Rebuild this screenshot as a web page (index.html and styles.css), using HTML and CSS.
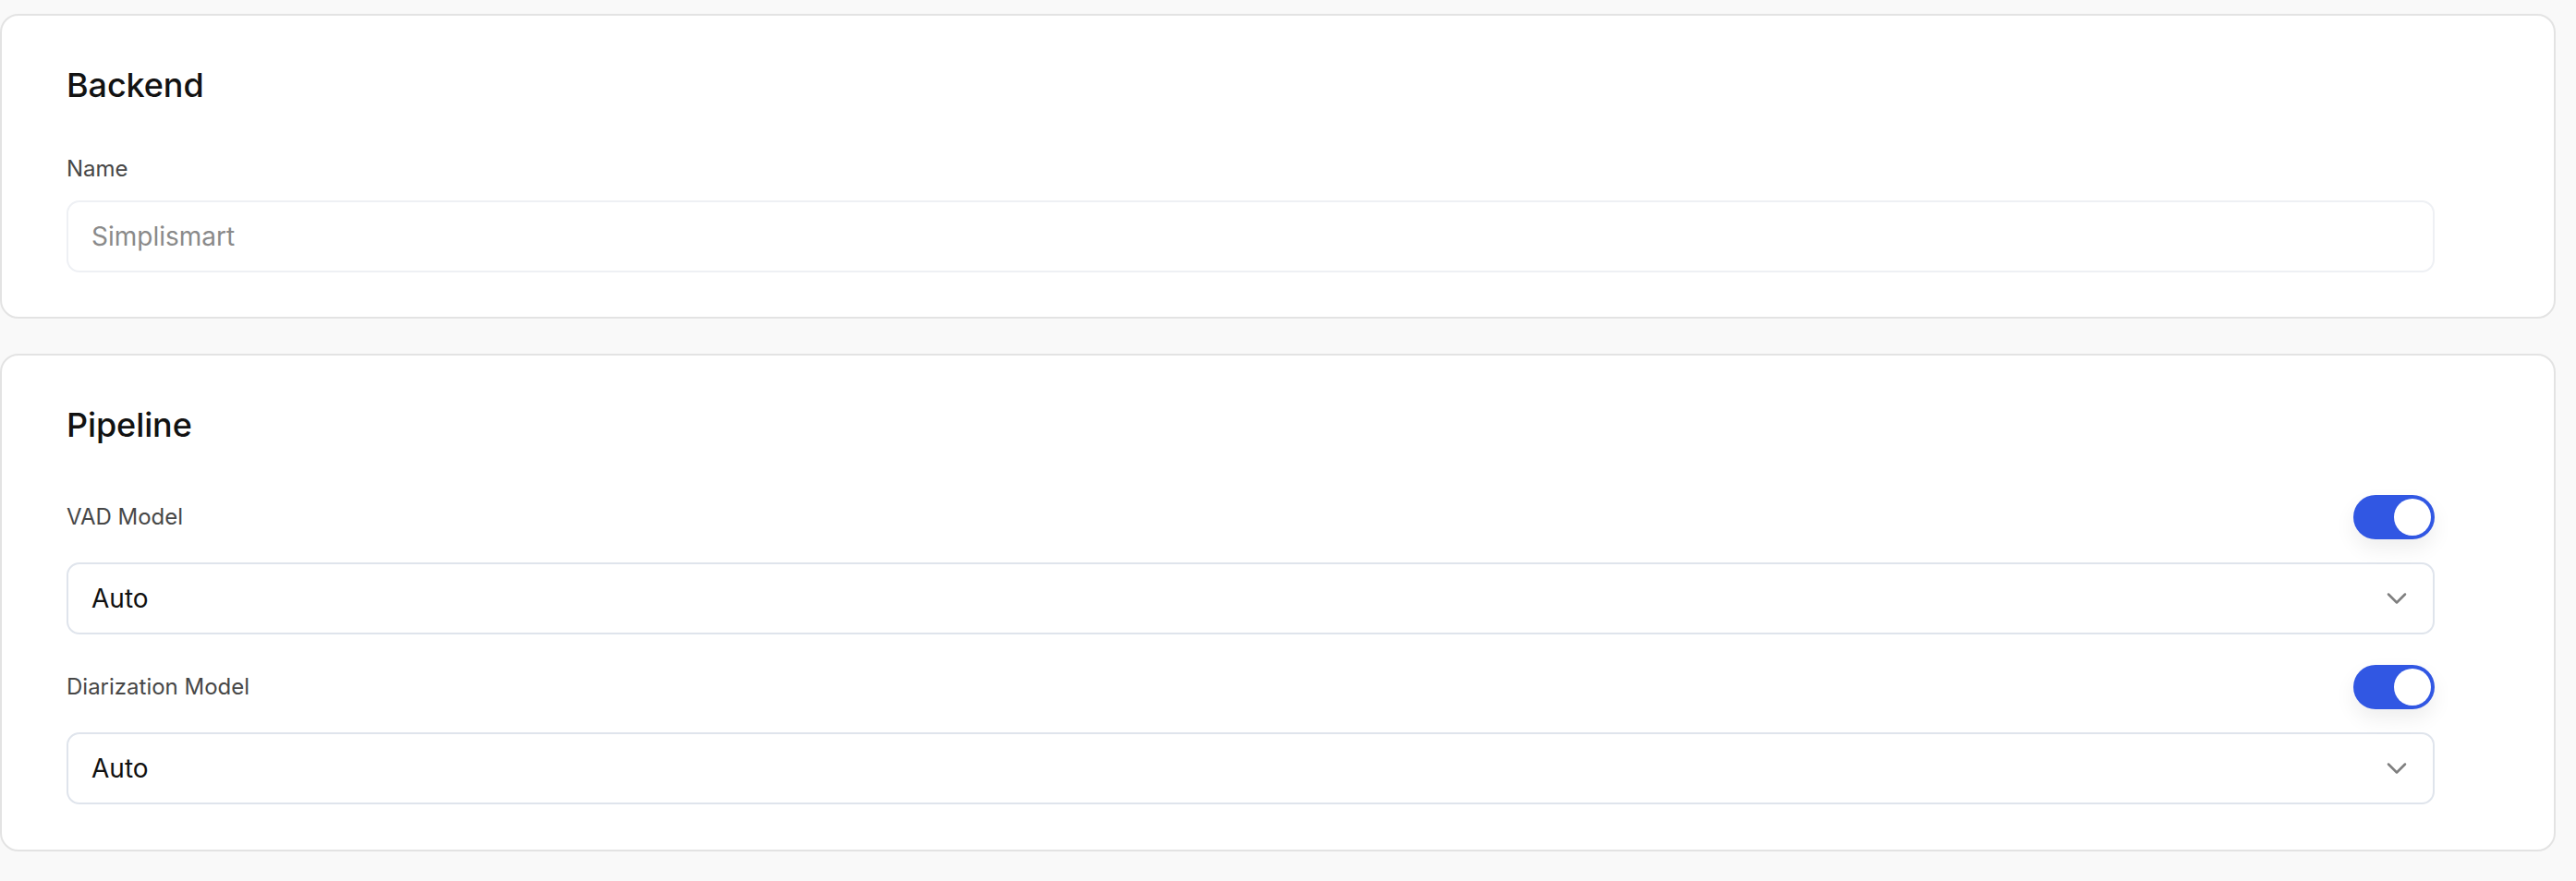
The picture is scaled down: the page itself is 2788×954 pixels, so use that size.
FILE: index.html
```html
<!DOCTYPE html>
<html lang="en">
<head>
<meta charset="utf-8">
<title>Settings</title>
<link rel="stylesheet" href="styles.css">
</head>
<body>
<main class="page">
  <section class="card">
    <h2 class="card-title card-title--backend">Backend</h2>
    <div class="field">
      <label class="field-label" for="name">Name</label>
      <input class="text-input" id="name" type="text" placeholder="Simplismart">
    </div>
  </section>

  <section class="card card--pipeline">
    <h2 class="card-title card-title--pipeline">Pipeline</h2>
    <div class="field-list">
      <div class="field field--toggle">
        <div class="field-row">
          <span class="field-label">VAD Model</span>
          <span class="toggle toggle--on"><span class="toggle-knob"></span></span>
        </div>
        <div class="select">
          <span class="select-value">Auto</span>
          <svg class="select-chevron" viewBox="0 0 24 24" fill="none" stroke="currentColor" stroke-width="1.7" stroke-linecap="round" stroke-linejoin="round"><path d="m6 9 6 6 6-6"/></svg>
        </div>
      </div>
      <div class="field field--toggle">
        <div class="field-row">
          <span class="field-label">Diarization Model</span>
          <span class="toggle toggle--on"><span class="toggle-knob"></span></span>
        </div>
        <div class="select">
          <span class="select-value">Auto</span>
          <svg class="select-chevron" viewBox="0 0 24 24" fill="none" stroke="currentColor" stroke-width="1.7" stroke-linecap="round" stroke-linejoin="round"><path d="m6 9 6 6 6-6"/></svg>
        </div>
      </div>
    </div>
  </section>
</main>
</body>
</html>
```

FILE: styles.css
```css
* {
  box-sizing: border-box;
}

html,
body {
  margin: 0;
  padding: 0;
  background: #f9f9f9;
}

body {
  font-family: Inter, "Noto Sans", "Liberation Sans", sans-serif;
  color: #111111;
  -webkit-font-smoothing: antialiased;
}

.page {
  display: flex;
  flex-direction: column;
  gap: 38px;
  padding: 15px 22px 40px 0;
}

.card {
  background: #ffffff;
  border: 2px solid #e3e3e3;
  border-radius: 20px;
  padding: 51px 129px 48px 70px;
}

.card--pipeline {
  padding-bottom: 49px;
}

.card-title {
  margin: 0;
  font-size: 36px;
  line-height: 49px;
  font-weight: 500;
  color: #121212;
  letter-spacing: -0.1px;
}

.card-title--backend {
  margin-bottom: 48px;
}

.card-title--pipeline {
  margin-bottom: 51px;
}

.field {
  display: flex;
  flex-direction: column;
  gap: 16px;
}

.field--toggle {
  gap: 25px;
}

.field-list {
  display: flex;
  flex-direction: column;
  gap: 33px;
}

.field-label {
  font-size: 24px;
  line-height: 36px;
  font-weight: 400;
  color: #474747;
}

.field-row {
  display: flex;
  align-items: center;
  justify-content: space-between;
  height: 48px;
}

.text-input {
  display: block;
  width: 100%;
  height: 78px;
  margin: 0;
  padding: 0 24px 0 25px;
  border: 2px solid #eef0f4;
  border-radius: 14px;
  background: #ffffff;
  font-family: inherit;
  font-size: 28px;
  color: #111111;
  outline: none;
}

.text-input::placeholder {
  color: #8a8a8a;
  opacity: 1;
}

.select {
  display: flex;
  align-items: center;
  justify-content: space-between;
  height: 78px;
  padding: 0 21px 0 25px;
  border: 2px solid #dfe4ec;
  border-radius: 14px;
  background: #ffffff;
}

.select-value {
  font-size: 28px;
  line-height: 36px;
  color: #111111;
}

.select-chevron {
  width: 36px;
  height: 36px;
  color: #7f7f7f;
  flex: none;
}

.toggle {
  position: relative;
  display: inline-block;
  width: 88px;
  height: 48px;
  border-radius: 24px;
  background: #d4d7de;
  box-shadow: 0 10px 22px rgba(0, 0, 0, 0.07);
  flex: none;
}

.toggle--on {
  background: #3157e3;
}

.toggle-knob {
  position: absolute;
  top: 4px;
  left: 4px;
  width: 40px;
  height: 40px;
  border-radius: 50%;
  background: #ffffff;
}

.toggle--on .toggle-knob {
  left: 44px;
}
```
